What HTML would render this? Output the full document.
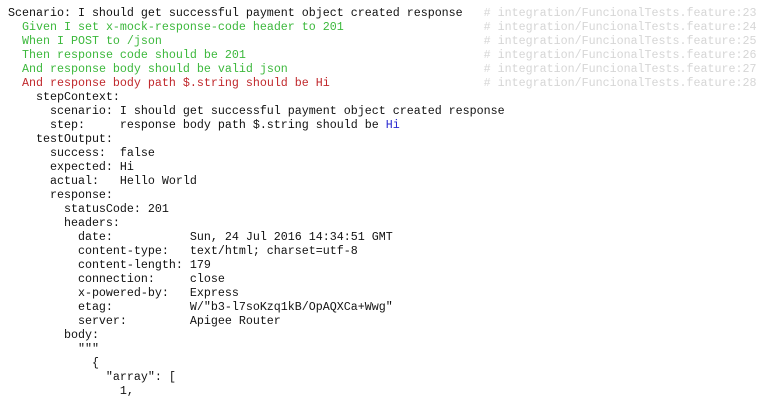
<!DOCTYPE html>
<html><head><meta charset="utf-8"><style>
html,body{margin:0;padding:0;background:#fff;width:763px;height:400px;overflow:hidden}
pre{margin:0;position:absolute;left:8px;top:6px;font-family:"Liberation Mono",monospace;font-size:11.67px;line-height:14px;color:#111}
.g{color:#3cb83c}.r{color:#c0282c}.c{color:#d6d6d6}.b{color:#2a2ad0}
</style></head><body><pre>Scenario: I should get successful payment object created response   <span class="c"># integration/FuncionalTests.feature:23</span>
  <span class="g">Given I set x-mock-response-code header to 201</span>                    <span class="c"># integration/FuncionalTests.feature:24</span>
  <span class="g">When I POST to /json</span>                                              <span class="c"># integration/FuncionalTests.feature:25</span>
  <span class="g">Then response code should be 201</span>                                  <span class="c"># integration/FuncionalTests.feature:26</span>
  <span class="g">And response body should be valid json</span>                            <span class="c"># integration/FuncionalTests.feature:27</span>
  <span class="r">And response body path $.string should be Hi</span>                      <span class="c"># integration/FuncionalTests.feature:28</span>
    stepContext:
      scenario: I should get successful payment object created response
      step:     response body path $.string should be <span class="b">Hi</span>
    testOutput:
      success:  false
      expected: Hi
      actual:   Hello World
      response:
        statusCode: 201
        headers:
          date:           Sun, 24 Jul 2016 14:34:51 GMT
          content-type:   text/html; charset=utf-8
          content-length: 179
          connection:     close
          x-powered-by:   Express
          etag:           W/"b3-l7soKzq1kB/OpAQXCa+Wwg"
          server:         Apigee Router
        body:
          """
            {
              "array": [
                1,
</pre></body></html>
